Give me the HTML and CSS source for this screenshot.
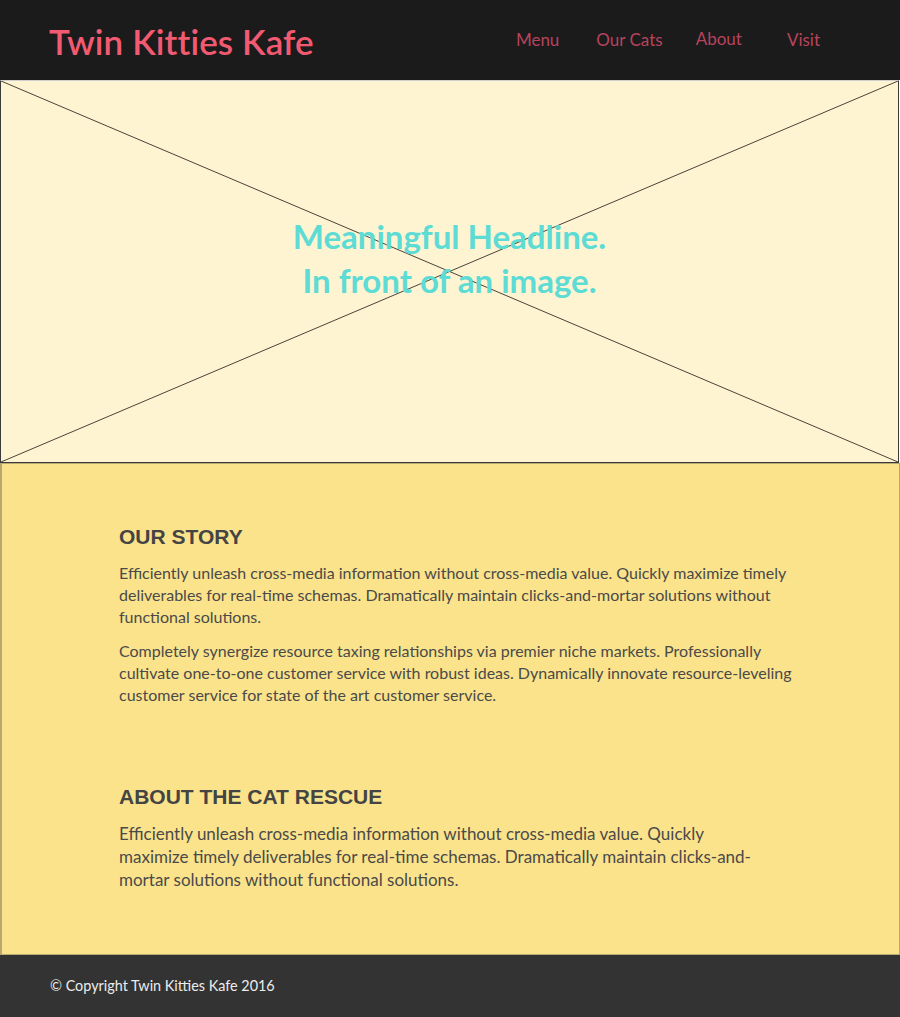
FILE: index.html
```html
<!DOCTYPE html>
<html lang="en">
<head>
<meta charset="utf-8">
<title>Twin Kitties Kafe</title>
<link rel="stylesheet" href="styles.css">
</head>
<body>
<div class="page">
  <header class="site-header">
    <div class="brand">Twin Kitties Kafe</div>
    <nav class="nav">
      <a class="nav-link" href="#">Menu</a>
      <a class="nav-link" href="#">Our Cats</a>
      <a class="nav-link nav-about" href="#">About</a>
      <a class="nav-link nav-visit" href="#">Visit</a>
    </nav>
  </header>
  <section class="hero">
    <svg class="hero-x" viewBox="0 0 100 100" preserveAspectRatio="none" aria-hidden="true">
      <line x1="0" y1="0" x2="100" y2="100" vector-effect="non-scaling-stroke"/>
      <line x1="100" y1="0" x2="0" y2="100" vector-effect="non-scaling-stroke"/>
    </svg>
    <h1 class="hero-title">Meaningful Headline.<br>In front of an image.</h1>
  </section>
  <main class="content">
    <article class="block block-story">
      <h2 class="block-title">OUR STORY</h2>
      <p class="block-text">Efficiently unleash cross-media information without cross-media value. Quickly maximize timely deliverables for real-time schemas. Dramatically maintain clicks-and-mortar solutions without functional solutions.</p>
      <p class="block-text">Completely synergize resource taxing relationships via premier niche markets. Professionally cultivate one-to-one customer service with robust ideas. Dynamically innovate resource-leveling customer service for state of the art customer service.</p>
    </article>
    <article class="block block-rescue">
      <h2 class="block-title">ABOUT THE CAT RESCUE</h2>
      <p class="block-text block-text-lg">Efficiently unleash cross-media information without cross-media value. Quickly maximize timely deliverables for real-time schemas. Dramatically maintain clicks-and-mortar solutions without functional solutions.</p>
    </article>
  </main>
  <footer class="site-footer">
    <p class="copyright">© Copyright Twin Kitties Kafe 2016</p>
  </footer>
</div>
</body>
</html>
```
FILE: styles.css
```css
* { box-sizing: border-box; }
html, body { margin: 0; padding: 0; }
body {
  background: #ffffff;
  font-family: "Lato", "Noto Sans", sans-serif;
  width: 900px;
}
.page { width: 900px; }

.site-header {
  height: 80px;
  background: #1b1b1b;
  display: flex;
  align-items: center;
  justify-content: space-between;
  padding: 0 0 0 49px;
}
.brand {
  color: #f25a72;
  font-family: "Lato", sans-serif;
  font-weight: 600;
  font-size: 35px;
  letter-spacing: 0.1px;
  padding-top: 2px;
}
.nav {
  display: flex;
  align-items: center;
  padding-right: 80px;
  padding-bottom: 2px;
}
.nav-link {
  color: #b8435d;
  text-decoration: none;
  font-size: 17px;
  font-family: "Lato", sans-serif;
  margin-left: 37px;
}
.nav-about { margin-left: 33px; position: relative; top: -1px; }
.nav-visit { margin-left: 45px; }

.hero {
  position: relative;
  height: 383px;
  background: #fef4d1;
  border-top: 1px solid #cfcfcf;
  border-left: 1px solid #3a3a3a;
  border-right: 1px solid #3a3a3a;
  border-bottom: 1px solid #3a3a3a;
  width: 899px;
  display: flex;
  align-items: center;
  justify-content: center;
}
.hero-x {
  position: absolute;
  inset: 0;
  width: 100%;
  height: 100%;
}
.hero-x line { stroke: #4a4438; stroke-width: 1; }
.hero-title {
  position: relative;
  margin: 0 0 28px 0;
  text-align: center;
  color: #5ddbd5;
  font-family: "Lato", sans-serif;
  font-weight: 700;
  font-size: 33px;
  line-height: 44px;
}

.content {
  background: #fbe38b;
  border: 1px solid #b9a86f;
  border-left-width: 2px;
  height: 492px;
  padding: 60px 0 0 117px;
  display: flex;
  flex-direction: column;
}
.block-story { width: 685px; }
.block-rescue { width: 650px; margin-top: 66px; }
.block-title {
  margin: 0 0 12px 0;
  font-family: "Liberation Sans", Arial, sans-serif;
  font-weight: bold;
  font-size: 21px;
  line-height: 26px;
  color: #444444;
}
.block-text {
  margin: 0 0 12px 0;
  font-size: 16px;
  line-height: 22px;
  color: #4a4a4a;
}
.block-text-lg {
  font-size: 17px;
  line-height: 23px;
}

.site-footer {
  background: #333333;
  height: 62px;
  display: flex;
  align-items: center;
  padding-left: 50px;
}
.copyright {
  margin: 0;
  color: #ececec;
  font-size: 14.4px;
  padding-bottom: 2px;
}
```
